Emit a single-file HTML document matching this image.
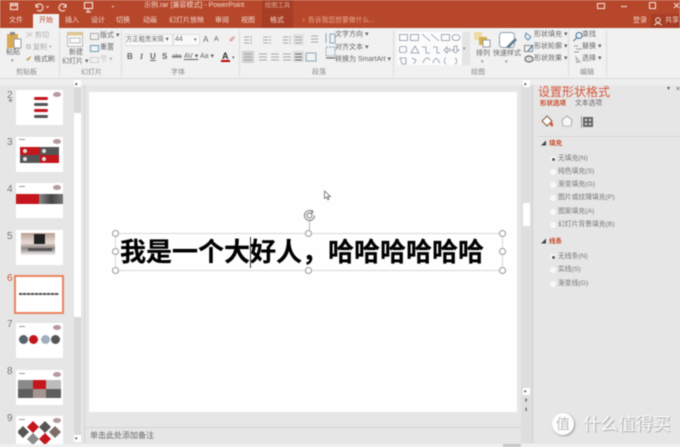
<!DOCTYPE html>
<html><head><meta charset="utf-8"><style>
html,body{margin:0;padding:0;background:#e6e6e6}
#p{position:relative;width:680px;height:447px;overflow:hidden;background:#e6e6e6;font-family:"Liberation Sans","Noto Sans CJK SC",sans-serif;color:#555;filter:blur(.4px)}
#p div,#p span.t{position:absolute}
.t{position:absolute;white-space:nowrap;font-size:7px;line-height:10px;color:#666}
.w{color:#f3d9cf}
.g{color:#888;font-size:7px}
.n{font-size:10px;color:#777;line-height:12px;left:7px}
.th{left:16px;width:47px;height:35px;background:#fff}
.r{width:6px;height:6px;border-radius:50%;background:#f8f8f8;left:550px;border:0}
.h{width:5px;height:5px;border-radius:50%;background:#fff;border:1px solid #999;box-sizing:content-box}
.o{font-size:6.800px;color:#777;left:558px;line-height:10px}
</style></head><body><div id="p">
<!-- title -->
<div style="left:0;top:0;width:680px;height:28px;background:#b7472a"></div>
<div style="left:262px;top:0;width:31px;height:28px;background:#a63d24"></div>
<div style="left:651px;top:14px;width:29px;height:14px;background:#a63d24"></div>
<svg style="position:absolute;left:0;top:0" width="130" height="14" fill="none" stroke="#f3dcd3" stroke-width="1.200">
<rect x="10.500" y="3.500" width="7" height="6"/><path d="M12 3.500v2h4v-2"/>
<path d="M36 7a3.500 3.500 0 1 1 1 3M36 4v3h3"/><path d="M46 6l1.500 1.500L49 6" stroke-width=".8"/>
<path d="M66 7a3.500 3.500 0 1 0-1 3M66 4v3h-3"/>
<rect x="84.500" y="2.500" width="8" height="6"/><path d="M88 9v3M86 12h5"/><path d="M112 6l1 1 1-1" stroke-width=".8"/></svg>
<span class="t w" style="left:144px;top:1px;font-size:7px">示例.rar [兼容模式] - PowerPoint</span>
<span class="t w" style="left:265px;top:1px;font-size:6.300px;color:#dca795">绘图工具</span>
<!-- window buttons -->
<svg style="position:absolute;left:590px;top:0" width="90" height="14" fill="none" stroke="#f5e3dc">
<rect x="7.500" y="3.500" width="7" height="5"/><path d="M31 6.500h6"/><rect x="59.500" y="2.500" width="6" height="6"/><path d="M84 3l5 5M89 3l-5 5"/></svg>
<!-- tabs -->
<div style="left:33px;top:14px;width:26px;height:15px;background:#f1f1f1"></div>
<span class="t w" style="left:9px;top:16px">文件</span>
<span class="t" style="left:39px;top:16px;color:#bd4b2d">开始</span>
<span class="t w" style="left:65px;top:16px">插入</span>
<span class="t w" style="left:91px;top:16px">设计</span>
<span class="t w" style="left:116px;top:16px">切换</span>
<span class="t w" style="left:143px;top:16px">动画</span>
<span class="t w" style="left:169px;top:16px">幻灯片放映</span>
<span class="t w" style="left:215px;top:16px">审阅</span>
<span class="t w" style="left:241px;top:16px">视图</span>
<span class="t w" style="left:270px;top:16px">格式</span>
<span class="t" style="left:301px;top:16px;color:#e8a893;font-size:6.800px">♀ 告诉我您想要做什么...</span>
<span class="t w" style="left:633px;top:16px">登录</span>
<svg style="position:absolute;left:654px;top:17px" width="9" height="9" fill="none" stroke="#f3dcd3"><circle cx="4" cy="3" r="2.300"/><path d="M.5 8.500c1-3 6-3 7 0"/></svg>
<span class="t w" style="left:665px;top:16px">共享</span>
<!-- ribbon -->
<div style="left:0;top:28px;width:680px;height:50px;background:#f1f1f1"></div>
<div style="left:0;top:78px;width:680px;height:1px;background:#d9d9d9"></div>
<div style="left:59px;top:30px;width:1px;height:46px;background:#dcdcdc"></div>
<div style="left:121px;top:30px;width:1px;height:46px;background:#dcdcdc"></div>
<div style="left:239px;top:30px;width:1px;height:46px;background:#dcdcdc"></div>
<div style="left:393px;top:30px;width:1px;height:46px;background:#dcdcdc"></div>
<div style="left:568px;top:30px;width:1px;height:46px;background:#dcdcdc"></div>
<div style="left:606px;top:30px;width:1px;height:46px;background:#dcdcdc"></div>
<!-- clipboard -->
<svg style="position:absolute;left:5px;top:31px" width="18" height="18"><rect x="2" y="3" width="11" height="14" fill="#d8a952"/><rect x="5" y="1" width="5" height="3" fill="#8a8a8a"/><rect x="9" y="8" width="7" height="9" fill="#fff" stroke="#999"/></svg>
<span class="t" style="left:6px;top:48px">粘贴</span>
<span class="t g" style="left:11px;top:56px;font-size:5px">▾</span>
<span class="t g" style="left:26px;top:31px;color:#aaa">✂ 剪切</span>
<span class="t g" style="left:26px;top:43px;color:#aaa">⧉ 复制 ▾</span>
<span class="t" style="left:26px;top:55px"><b style="color:#c8973c">✔</b> 格式刷</span>
<span class="t g" style="left:16px;top:68px">剪贴板</span>
<!-- slides -->
<svg style="position:absolute;left:67px;top:32px" width="16" height="15"><rect x=".5" y=".5" width="15" height="14" fill="#fafafa" stroke="#b9b9b9"/><rect x=".5" y=".5" width="15" height="3" fill="#e3c98d"/><rect x="3" y="6" width="10" height="5" fill="none" stroke="#bbb"/></svg>
<span class="t" style="left:69px;top:48px">新建</span>
<span class="t" style="left:62px;top:57px">幻灯片 ▾</span>
<span class="t g" style="left:81px;top:68px">幻灯片</span>
<svg style="position:absolute;left:90px;top:33px" width="10" height="32" fill="none" stroke="#aaa"><rect x=".5" y=".5" width="8" height="6"/><rect x=".5" y="12.500" width="8" height="6" stroke="#6a9fb9"/><rect x=".5" y="24.500" width="8" height="5" stroke="#ccc"/></svg>
<span class="t" style="left:100px;top:31px">版式 ▾</span>
<span class="t" style="left:100px;top:43px">重置</span>
<span class="t g" style="left:100px;top:55px;color:#bbb">节 ▾</span>
<!-- font -->
<div style="left:125px;top:34px;width:48px;height:12px;background:#f9f9f9;border:1px solid #dedede;box-sizing:border-box"></div>
<div style="left:173px;top:34px;width:27px;height:12px;background:#f9f9f9;border:1px solid #dedede;box-sizing:border-box"></div>
<span class="t" style="left:126px;top:35px;font-size:6.300px">方正粗黑宋简 ▾</span>
<span class="t" style="left:175px;top:35px;font-size:7px">44</span>
<span class="t" style="left:194px;top:35px;font-size:5px">▾</span>
<span class="t" style="left:203px;top:35px;font-size:8px">A</span>
<span class="t" style="left:214px;top:35px;font-size:7px">A</span>
<span class="t" style="left:229px;top:35px;font-size:8px;color:#c66">✐</span>
<span class="t" style="left:127px;top:52px;font-weight:bold;font-size:8px">B</span>
<span class="t" style="left:140px;top:52px;font-style:italic;font-size:8px;font-family:'Liberation Serif',serif;font-weight:bold">I</span>
<span class="t" style="left:150px;top:52px;font-size:8px;text-decoration:underline;font-weight:bold">U</span>
<span class="t" style="left:162px;top:52px;font-size:8px;font-weight:bold">S</span>
<span class="t" style="left:172px;top:52px;font-size:6px;text-decoration:line-through">abc</span>
<span class="t" style="left:184px;top:52px;font-size:7px;text-decoration:underline">AV ▾</span>
<span class="t" style="left:200px;top:52px;font-size:7px">Aa ▾</span>
<span class="t" style="left:222px;top:51px;font-size:9px;color:#333;font-weight:bold">A</span>
<div style="left:221px;top:60px;width:9px;height:2px;background:#c00000"></div>
<span class="t" style="left:232px;top:53px;font-size:5px">▾</span>
<span class="t g" style="left:171px;top:68px">字体</span>
<!-- paragraph -->
<svg style="position:absolute;left:242px;top:34px" width="85" height="30" stroke="#a8a8a8" fill="none">
<path d="M2 3h8M2 6h8M2 9h8M21 3h8M21 6h8M21 9h8M41 3h8M41 6h8M41 9h8" stroke-dasharray="5 1"/>
<rect x="51" y="0" width="11" height="11" fill="#e2e2e2" stroke="none"/><path d="M53 3h7M53 6h7M53 9h7"/>
<path d="M69 2h7M69 5h7M69 8h7" />
<rect x="0" y="17" width="12" height="12" fill="#d2d2d2" stroke="none"/>
<path d="M2 20h8M2 23h8M2 26h8M17 20h8M17 23h8M17 26h8M29 20h8M29 23h8M29 26h8M41 20h8M41 23h8M41 26h8"/>
<rect x="51" y="17" width="11" height="11" fill="#dcdcdc" stroke="none"/><path d="M53 20h7M53 23h7M53 26h7" stroke="#6d6d6d"/>
<rect x="64" y="19" width="10" height="8" stroke="#8aa5bb"/></svg>
<svg style="position:absolute;left:324px;top:31px" width="13" height="32" fill="none" stroke="#8aa5bb"><path d="M2 2v10M6 3h5v9H6z"/><path d="M2 16h9v9H2z" stroke-dasharray="2 1"/><path d="M2 27h9" stroke="#555"/></svg>
<span class="t" style="left:335px;top:30px">文字方向 ▾</span>
<span class="t" style="left:335px;top:43px">对齐文本 ▾</span>
<span class="t" style="left:335px;top:55px">转换为 SmartArt ▾</span>
<span class="t g" style="left:312px;top:68px">段落</span>
<!-- shapes gallery -->
<div style="left:397px;top:32px;width:73px;height:33px;background:#fbfbfb"></div>
<div style="left:462px;top:32px;width:8px;height:33px;background:#e4e4e4"></div>
<svg style="position:absolute;left:398px;top:32px" width="64" height="33" fill="none" stroke="#8a96a2" stroke-width=".8">
<rect x="1.500" y="2.500" width="8" height="6"/><rect x="12.500" y="2.500" width="8" height="6"/><path d="M24 2l8 7M33 2l8 7"/><rect x="43.500" y="2.500" width="8" height="6"/><ellipse cx="58" cy="5.500" rx="4" ry="3"/>
<rect x="1.500" y="14.500" width="7" height="6" rx="1.500"/><path d="M13 21l4-7 4 7z"/><path d="M24 15h4v6h4M35 15h4v6h3"/><path d="M46 18l3-3v2h3v2h-3v2z"/><path d="M56 14h3v4h2l-3.500 3-3.500-3h2z"/>
<path d="M2 26h6v6H4zM14 26l4 2-2 4M25 31c2-6 5-6 7-3M35 31c2-7 4-5 7 0"/><path d="M48 26c-2 0-1 3-2 3 1 0 0 3 2 3M57 26c2 0 1 3 2 3-1 0 0 3-2 3"/></svg>
<span class="t" style="left:463px;top:44px;font-size:5px;color:#888">▾</span>
<svg style="position:absolute;left:473px;top:31px" width="20" height="18"><rect x="1" y="1" width="8" height="8" fill="#f0dba6"/><rect x="6" y="6" width="8" height="8" fill="#d4b24f"/><rect x="10" y="9" width="7" height="7" fill="#fff" stroke="#999"/></svg>
<span class="t" style="left:476px;top:49px">排列</span>
<span class="t g" style="left:481px;top:57px;font-size:5px">▾</span>
<svg style="position:absolute;left:498px;top:31px" width="20" height="20"><rect x="1.500" y="1.500" width="15" height="15" rx="3" fill="#fff" stroke="#8ca0b0"/><path d="M8 16l9-9 2 2-8 8z" fill="#667f8f"/></svg>
<span class="t" style="left:493px;top:49px">快速样式</span>
<span class="t g" style="left:505px;top:57px;font-size:5px">▾</span>
<svg style="position:absolute;left:523px;top:31px" width="13" height="32" fill="none" stroke="#5b8db0"><path d="M3 2l5 4-3 3-3-3z"/><rect x="1.500" y="14.500" width="8" height="6" stroke="#888"/><path d="M5 20l5-6" stroke="#3f6f92"/><ellipse cx="6" cy="28" rx="4" ry="3" stroke="#555" fill="#ddd"/></svg>
<span class="t" style="left:534px;top:30px">形状填充 ▾</span>
<span class="t" style="left:534px;top:42px">形状轮廓 ▾</span>
<span class="t" style="left:534px;top:54px">形状效果 ▾</span>
<span class="t g" style="left:471px;top:68px">绘图</span>
<!-- edit -->
<svg style="position:absolute;left:572px;top:31px" width="12" height="32" fill="none" stroke="#3f6f92"><circle cx="7" cy="4.500" r="3"/><path d="M4.500 7L1.500 10"/><path d="M2 15h4M4 18h6M2 21h5" stroke="#999"/><path d="M4 26l4 5-2-.5-1 2z" stroke="#aaa"/></svg>
<span class="t" style="left:582px;top:30px">查找</span>
<span class="t" style="left:582px;top:42px">替换 ▾</span>
<span class="t" style="left:582px;top:54px">选择 ▾</span>
<span class="t g" style="left:580px;top:68px">编辑</span>
<!-- left pane -->
<div style="left:0;top:79px;width:680px;height:6px;background:#eeeeee"></div>
<div style="left:74px;top:85px;width:7px;height:350px;background:#d9d9d9"></div>
<div style="left:74px;top:113px;width:7px;height:204px;background:#fff"></div>
<div style="left:74px;top:80px;width:7px;height:7px;background:#fff"></div>
<div style="left:74px;top:435px;width:7px;height:7px;background:#fff"></div>
<span class="t" style="left:75px;top:79px;font-size:5px;color:#444">▴</span>
<span class="t" style="left:75px;top:434px;font-size:5px;color:#444">▾</span>
<div style="left:84px;top:85px;width:1px;height:358px;background:#d2d2d2"></div>
<span class="t n" style="top:90px">2</span><span class="t n" style="top:137px">3</span><span class="t n" style="top:184px">4</span><span class="t n" style="top:231px">5</span><span class="t n" style="top:273px;color:#d0552f">6</span><span class="t n" style="top:319px">7</span><span class="t n" style="top:366px">8</span><span class="t n" style="top:413px">9</span>
<span class="t" style="left:8px;top:96px;font-size:5px;color:#888">★</span>
<!-- thumb 2 -->
<div class="th" style="top:90px"></div>
<div style="left:34px;top:97px;width:14px;height:3px;background:#c4161c;border-radius:2px"></div>
<div style="left:34px;top:103px;width:14px;height:3px;background:#555;border-radius:2px"></div>
<div style="left:34px;top:109px;width:14px;height:3px;background:#c4161c;border-radius:2px"></div>
<div style="left:34px;top:115px;width:14px;height:3px;background:#555;border-radius:2px"></div>
<div style="left:53px;top:92px;width:8px;height:5px;border-radius:50%;background:#b69a9d"></div>
<!-- thumb 3 -->
<div class="th" style="top:137px"></div>
<div style="left:53px;top:139px;width:8px;height:5px;border-radius:50%;background:#b69a9d"></div>
<div style="left:19px;top:139px;width:6px;height:1px;background:#999"></div>
<div style="left:20px;top:147px;width:20px;height:8px;background:#c4161c"></div>
<div style="left:40px;top:147px;width:19px;height:8px;background:#555"></div>
<div style="left:20px;top:155px;width:20px;height:8px;background:#555"></div>
<div style="left:40px;top:155px;width:19px;height:8px;background:#c4161c"></div>
<div style="left:23px;top:149px;width:4px;height:4px;background:#ddd;border-radius:50%"></div>
<div style="left:42px;top:149px;width:4px;height:4px;background:#ddd;border-radius:50%"></div>
<div style="left:23px;top:157px;width:4px;height:4px;background:#ddd;border-radius:50%"></div>
<div style="left:42px;top:157px;width:4px;height:4px;background:#ddd;border-radius:50%"></div>
<!-- thumb 4 -->
<div class="th" style="top:183px"></div>
<div style="left:53px;top:185px;width:8px;height:5px;border-radius:50%;background:#b69a9d"></div>
<div style="left:19px;top:186px;width:6px;height:1px;background:#999"></div>
<div style="left:16px;top:194px;width:23px;height:10px;background:#c4161c"></div>
<div style="left:39px;top:194px;width:24px;height:10px;background:linear-gradient(90deg,#8a8a8a,#444 50%,#777)"></div>
<!-- thumb 5 -->
<div class="th" style="top:230px"></div>
<div style="left:21px;top:233px;width:34px;height:22px;background:linear-gradient(180deg,#b79d8f,#e8ddd6 45%,#8d8581 70%,#f0f0f0)"></div>
<div style="left:34px;top:234px;width:11px;height:10px;background:#222"></div>
<div style="left:28px;top:248px;width:24px;height:3px;background:#555"></div>
<!-- thumb 6 -->
<div style="left:14px;top:275px;width:50px;height:39px;background:#fff;border:2px solid #e9855f;box-sizing:border-box"></div>
<div style="left:19px;top:293px;width:40px;height:2px;background:repeating-linear-gradient(90deg,#555 0 3px,#bbb 3px 4px)"></div>
<!-- thumb 7 -->
<div class="th" style="top:323px"></div>
<div style="left:53px;top:325px;width:8px;height:5px;border-radius:50%;background:#b69a9d"></div>
<div style="left:19px;top:326px;width:6px;height:1px;background:#999"></div>
<div style="left:19px;top:335px;width:9px;height:9px;border-radius:50%;background:#58636c"></div>
<div style="left:29px;top:335px;width:9px;height:9px;border-radius:50%;background:#c4161c"></div>
<div style="left:41px;top:335px;width:9px;height:9px;border-radius:50%;background:#9fb0bb"></div>
<div style="left:51px;top:335px;width:9px;height:9px;border-radius:50%;background:#555"></div>
<!-- thumb 8 -->
<div class="th" style="top:370px"></div>
<div style="left:53px;top:372px;width:8px;height:5px;border-radius:50%;background:#b69a9d"></div>
<div style="left:19px;top:373px;width:6px;height:1px;background:#999"></div>
<div style="left:18px;top:380px;width:15px;height:9px;background:#8a8a8a"></div>
<div style="left:33px;top:380px;width:13px;height:9px;background:#c4161c"></div>
<div style="left:46px;top:380px;width:15px;height:9px;background:#bcbcbc"></div>
<div style="left:18px;top:389px;width:15px;height:9px;background:#5e5e5e"></div>
<div style="left:33px;top:389px;width:13px;height:9px;background:#a59591"></div>
<div style="left:46px;top:389px;width:15px;height:9px;background:#5e5e5e"></div>
<!-- thumb 9 -->
<div class="th" style="top:416px;height:28px"></div>
<div style="left:53px;top:418px;width:8px;height:5px;border-radius:50%;background:#b69a9d"></div>
<div style="left:19px;top:419px;width:6px;height:1px;background:#999"></div>
<svg style="position:absolute;left:18px;top:421px" width="44" height="23"><path d="M15 0l6 6-6 6-6-6z" fill="#c4161c"/><path d="M27 0l6 6-6 6-6-6z" fill="#555"/><path d="M5 5l6 6-6 6-6-6z" fill="#555"/><path d="M37 5l6 6-6 6-6-6z" fill="#7d6d69"/><path d="M27 12l6 6-6 6-6-6z" fill="#c4161c"/><path d="M15 12l6 6-6 6-6-6z" fill="#8b8b8b"/></svg>
<!-- workspace -->
<div style="left:89px;top:92px;width:428px;height:320px;background:#fefefe"></div>
<div style="left:84px;top:427px;width:447px;height:1px;background:#d2d2d2"></div>
<span class="t" style="left:90px;top:431px;font-size:8px;color:#666">单击此处添加备注</span>
<div style="left:0;top:444px;width:680px;height:3px;background:#f1f1f1"></div>
<div style="left:503px;top:444px;width:18px;height:3px;background:#c8c8c8"></div>
<!-- text box -->
<div style="left:115px;top:233px;width:388px;height:38px;border:1px solid #dadada;box-sizing:border-box"></div>
<div style="left:309px;top:220px;width:1px;height:13px;background:#bbb"></div>
<svg style="position:absolute;left:302px;top:208px" width="16" height="15" fill="none" stroke="#8d8d8d" stroke-width="1.200"><path d="M12.500 7.500a5 5 0 1 1-2-4"/><circle cx="7.500" cy="7.500" r="2.500"/><path d="M10 2l1 2.500-2.500.5"/></svg>
<div class="h" style="left:112px;top:230px"></div><div class="h" style="left:305px;top:230px"></div><div class="h" style="left:499px;top:230px"></div>
<div class="h" style="left:112px;top:248px"></div><div class="h" style="left:499px;top:248px"></div>
<div class="h" style="left:112px;top:267px"></div><div class="h" style="left:305px;top:267px"></div><div class="h" style="left:499px;top:267px"></div>
<span class="t" style="left:120px;top:237px;font-size:26px;line-height:30px;font-weight:700;-webkit-text-stroke:.2px #000;color:#000;font-family:'Liberation Sans','Noto Sans CJK SC',sans-serif">我是一个大好人，哈哈哈哈哈哈</span>
<div style="left:250px;top:237px;width:1px;height:31px;background:#333"></div>
<svg style="position:absolute;left:323px;top:190px" width="9" height="11"><path d="M1.500 1v7.500l2-1.500 1.300 2.800 1.200-.6L4.800 6.500H7.500z" fill="#fff" stroke="#555" stroke-width=".7"/></svg>
<!-- editor scroll -->
<div style="left:521px;top:85px;width:11px;height:358px;background:#dedede"></div>
<div style="left:523px;top:80px;width:7px;height:7px;background:#fff"></div>
<span class="t" style="left:524px;top:79px;font-size:5px;color:#444">▴</span>
<div style="left:523px;top:203px;width:7px;height:23px;background:#fff"></div>
<div style="left:523px;top:388px;width:7px;height:7px;background:#fff"></div>
<span class="t" style="left:524px;top:387px;font-size:5px;color:#444">▾</span>
<span class="t" style="left:524px;top:396px;font-size:5px;color:#444">⇞</span>
<span class="t" style="left:524px;top:405px;font-size:5px;color:#444">⇟</span>
<!-- right pane -->
<div style="left:532px;top:85px;width:1px;height:358px;background:#cfcfcf"></div>
<span class="t" style="left:538px;top:83px;font-size:12px;line-height:18px;color:#d4583a">设置形状格式</span>
<span class="t" style="left:667px;top:84px;font-size:6px;color:#555">▾</span>
<span class="t" style="left:676px;top:85px;font-size:7px;color:#555">×</span>
<span class="t" style="left:540px;top:99px;font-size:6.500px;color:#c7492b;font-weight:bold">形状选项</span>
<span class="t" style="left:575px;top:99px;font-size:6.800px">文本选项</span>
<svg style="position:absolute;left:540px;top:114px" width="60" height="16" fill="none">
<path d="M2 7l5-5 5 5-5 5z" stroke="#8a5a3a" fill="#fff"/><path d="M11 8c2 2 2 4 1 4s-2-2-1-4z" fill="#d4583a" stroke="#d4583a"/>
<path d="M22 6l5-4 5 4-1 6h-8z" stroke="#aaa" fill="#f8f8f8"/><rect x="23" y="12" width="8" height="2" fill="#ddd"/>
<rect x="43" y="3" width="10" height="10" fill="#666"/><path d="M45 5h2v2h-2zM49 5h2v2h-2zM45 9h2v2h-2zM49 9h2v2h-2z" fill="#ddd"/><path d="M41.500 2v12" stroke="#999"/></svg>
<div style="left:538px;top:136px;width:142px;height:1px;background:#d6d6d6"></div>
<span class="t" style="left:541px;top:139px;font-size:5px;color:#444">◢</span>
<span class="t" style="left:549px;top:139px;font-size:6.500px;color:#c7492b;font-weight:bold">填充</span>
<div class="r" style="top:156px"></div>
<div style="left:552px;top:158px;width:3px;height:3px;border-radius:50%;background:#555"></div>
<div class="r" style="top:169px"></div><div class="r" style="top:182px"></div><div class="r" style="top:195px"></div><div class="r" style="top:209px"></div><div class="r" style="top:222px"></div>
<span class="t o" style="top:154px">无填充(N)</span>
<span class="t o" style="top:167px">纯色填充(S)</span>
<span class="t o" style="top:180px">渐变填充(G)</span>
<span class="t o" style="top:193px">图片或纹理填充(P)</span>
<span class="t o" style="top:207px">图案填充(A)</span>
<span class="t o" style="top:220px">幻灯片背景填充(B)</span>
<span class="t" style="left:541px;top:237px;font-size:5px;color:#444">◢</span>
<span class="t" style="left:549px;top:237px;font-size:6.500px;color:#c7492b;font-weight:bold">线条</span>
<div class="r" style="top:254px"></div>
<div style="left:552px;top:256px;width:3px;height:3px;border-radius:50%;background:#555"></div>
<div class="r" style="top:267px"></div><div class="r" style="top:281px"></div>
<span class="t o" style="top:252px">无线条(N)</span>
<span class="t o" style="top:265px">实线(S)</span>
<span class="t o" style="top:279px">渐变线(G)</span>
<!-- watermark -->
<div style="left:552px;top:413px;width:22px;height:22px;border-radius:50%;background:#fdfdfd;box-shadow:1px 1px 2px #999"></div>
<span class="t" style="left:556px;top:416px;font-size:14px;line-height:16px;color:#bcbcbc">值</span>
<span class="t" style="left:583px;top:415px;font-size:17.500px;line-height:19px;color:#fafafa;text-shadow:1px 1px 1px #a8a8a8">什么值得买</span>
</div></body></html>
